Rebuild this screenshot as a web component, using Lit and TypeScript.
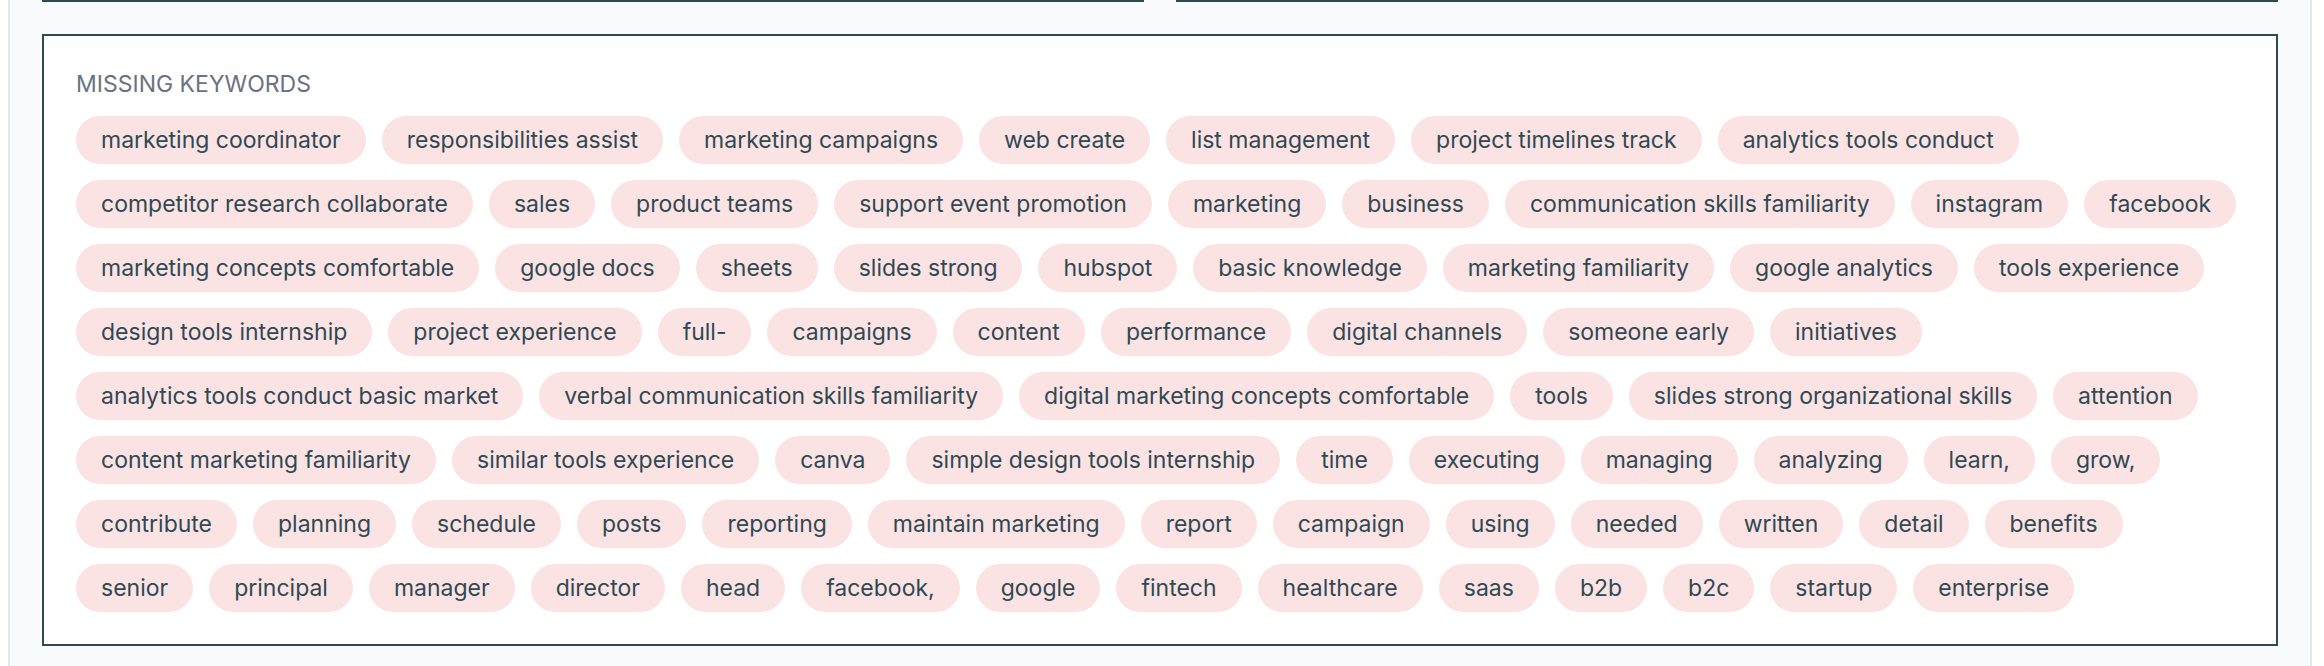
import { LitElement, html, css } from "lit";
import { customElement, property } from "lit/decorators.js";

const MISSING_KEYWORDS = [
  "marketing coordinator", "responsibilities assist", "marketing campaigns", "web create",
  "list management", "project timelines track", "analytics tools conduct",
  "competitor research collaborate", "sales", "product teams", "support event promotion",
  "marketing", "business", "communication skills familiarity", "instagram", "facebook",
  "marketing concepts comfortable", "google docs", "sheets", "slides strong", "hubspot",
  "basic knowledge", "marketing familiarity", "google analytics", "tools experience",
  "design tools internship", "project experience", "full-", "campaigns", "content",
  "performance", "digital channels", "someone early", "initiatives",
  "analytics tools conduct basic market", "verbal communication skills familiarity",
  "digital marketing concepts comfortable", "tools", "slides strong organizational skills",
  "attention",
  "content marketing familiarity", "similar tools experience", "canva",
  "simple design tools internship", "time", "executing", "managing", "analyzing", "learn,",
  "grow,",
  "contribute", "planning", "schedule", "posts", "reporting", "maintain marketing", "report",
  "campaign", "using", "needed", "written", "detail", "benefits",
  "senior", "principal", "manager", "director", "head", "facebook,", "google", "fintech",
  "healthcare", "saas", "b2b", "b2c", "startup", "enterprise",
];

@customElement("keyword-panel")
export class KeywordPanel extends LitElement {
  @property() heading = "";
  @property({ attribute: false }) keywords: string[] = [];

  static styles = css`
    :host {
      display: block;
    }
    .panel {
      padding: 32px;
      border: 2px solid #2f4954;
      background: #ffffff;
    }
    .heading {
      margin: 0 0 16px;
      font-size: 23px;
      font-weight: 400;
      line-height: 32px;
      color: #6b7280;
      text-transform: uppercase;
    }
    .keywords {
      display: flex;
      flex-wrap: wrap;
      gap: 16px;
      margin: 0;
      padding: 0;
      list-style: none;
    }
    .keyword {
      padding: 8px 25px;
      border-radius: 24px;
      background: #fbe3e3;
      color: #2f4954;
      font-size: 23px;
      line-height: 32px;
      white-space: nowrap;
    }
  `;

  render() {
    return html`
      <section class="panel" aria-labelledby="heading">
        <h2 class="heading" id="heading">${this.heading}</h2>
        <ul class="keywords">
          ${this.keywords.map((word) => html`<li class="keyword">${word}</li>`)}
        </ul>
      </section>
    `;
  }
}

@customElement("app-root")
export class AppRoot extends LitElement {
  static styles = css`
    :host {
      display: flex;
      box-sizing: border-box;
      min-height: 100vh;
      padding: 0 12px 0 8px;
      background: #ffffff;
      font-family: Inter, "Liberation Sans", sans-serif;
    }
    .report {
      flex: 1;
      min-width: 0;
      padding: 0 32px 18px;
      border: solid #e2e8f0;
      border-width: 0 2px;
      background: #f8fafc;
    }
    /* Lower edges of the two summary cards above the keyword panel. */
    .summary {
      display: grid;
      grid-template-columns: 1fr 1fr;
      gap: 32px;
      margin-bottom: 32px;
    }
    .summary-card {
      border-bottom: 2px solid #2f4954;
    }
  `;

  render() {
    return html`
      <main class="report">
        <div class="summary">
          <div class="summary-card"></div>
          <div class="summary-card"></div>
        </div>
        <keyword-panel heading="Missing keywords" .keywords=${MISSING_KEYWORDS}></keyword-panel>
      </main>
    `;
  }
}
